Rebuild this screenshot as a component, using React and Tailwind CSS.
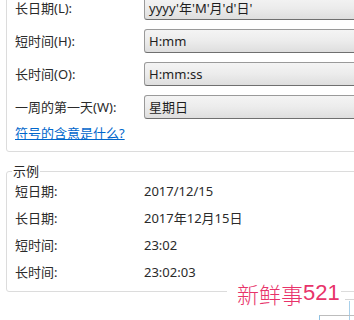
import React from "react";

const formatRows = [
  { label: "长日期(L):", value: "yyyy'年'M'月'd'日'" },
  { label: "短时间(H):", value: "H:mm" },
  { label: "长时间(O):", value: "H:mm:ss" },
  { label: "一周的第一天(W):", value: "星期日" },
];

const sampleRows = [
  { label: "短日期:", value: "2017/12/15" },
  { label: "长日期:", value: "2017年12月15日" },
  { label: "短时间:", value: "23:02" },
  { label: "长时间:", value: "23:02:03" },
];

function ComboBox({ value }) {
  return (
    <div className="h-[24px] w-[260px] flex items-center pl-[4px] rounded-[3px] border border-[#9a9a9a] border-b-[#6f6f6f] bg-linear-to-b from-[#f4f4f4] via-[#ececec] to-[#dedede] text-[#1e1e1e]">
      {value}
    </div>
  );
}

export default function App() {
  return (
    <div
      className="relative w-[354px] h-[320px] overflow-hidden bg-white text-[13px] leading-[18px] text-[#2a2a2a]"
      style={{ fontFamily: '"Noto Sans", "Noto Sans CJK SC", sans-serif' }}
    >
      <div className="ml-[6px] mt-[-10px] w-[420px] rounded-[3px] border border-[#dcdcdc] pl-[8px] pt-[5px] pb-[9px]">
        <div className="flex flex-col gap-[9px]">
          {formatRows.map((row) => (
            <div key={row.label} className="flex items-center h-[24px]">
              <span className="w-[129px]">{row.label}</span>
              <ComboBox value={row.value} />
            </div>
          ))}
        </div>
        <a href="#" className="mt-[5px] block w-fit text-[#0066cc] underline">
          符号的含意是什么?
        </a>
      </div>

      <fieldset className="ml-[6px] mt-[10px] w-[420px] rounded-[3px] border border-[#dcdcdc] pl-[8px] pt-[2px] pb-[10px]">
        <legend className="ml-[-3px] px-[1px] text-[#2a2a2a]">示例</legend>
        <div className="flex flex-col gap-[9px]">
          {sampleRows.map((row) => (
            <div key={row.label} className="flex items-center">
              <span className="w-[129px]">{row.label}</span>
              <span>{row.value}</span>
            </div>
          ))}
        </div>
      </fieldset>

      {/* background window bits behind the watermark */}
      <div className="absolute left-[345px] top-[299px] w-[20px] h-[30px] border-t border-[#d6d6d6]" />
      <div className="absolute left-[349px] top-[301px] w-[10px] h-[30px] border-l border-[#a9d0ea]" />
      <div className="absolute left-[319px] top-[315px] w-[40px] h-[10px] border-t border-l border-t-[#bdbdbd] border-l-[#8cc1e4]" />

      <div className="absolute left-[227px] top-[276px] w-[114px] h-[33px] bg-white flex items-center pl-[10px] text-[#e8336a]">
        <span
          className="text-[22px] leading-none font-light"
          style={{ fontFamily: '"Noto Sans CJK SC", serif' }}
        >
          新鲜事
        </span>
        <span
          className="text-[22px] leading-none"
          style={{ fontFamily: '"Liberation Sans", sans-serif' }}
        >
          521
        </span>
      </div>
    </div>
  );
}
